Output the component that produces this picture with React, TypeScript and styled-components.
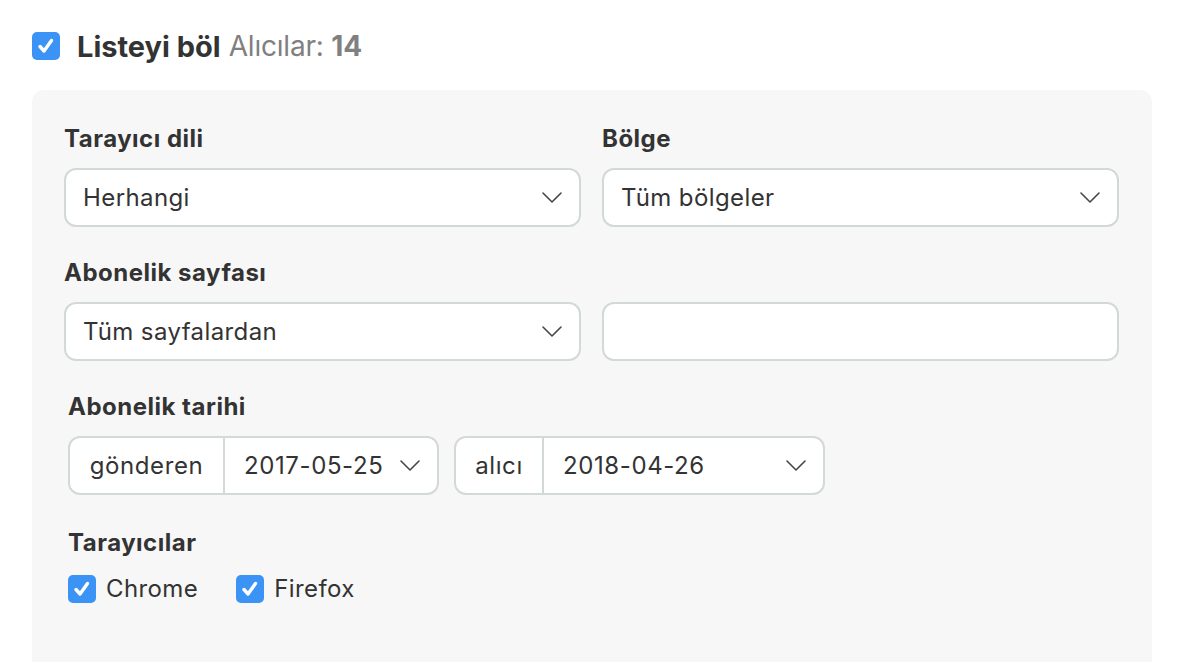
import React from 'react';
import styled, { createGlobalStyle } from 'styled-components';

const GlobalStyle = createGlobalStyle`
  * { box-sizing: border-box; }
  html, body {
    margin: 0;
    padding: 0;
    background: #fff;
    font-family: Inter, "Noto Sans", sans-serif;
    color: #333;
  }
`;

const Page = styled.div`
  padding: 32px 32px 0 32px;
  height: 662px;
  overflow: hidden;
`;

const HeaderRow = styled.label`
  display: flex;
  align-items: center;
  gap: 17px;
  height: 28px;
`;

const Box = styled.span`
  width: 28px;
  height: 28px;
  border-radius: 5px;
  background: #3b93f5;
  display: inline-flex;
  align-items: center;
  justify-content: center;
  flex-shrink: 0;
`;

const HeaderTitle = styled.span`
  font-size: 29px;
  font-weight: 700;
  color: #333;
  letter-spacing: 0;
`;

const HeaderMeta = styled.span`
  font-size: 28px;
  font-weight: 400;
  color: #808080;
  letter-spacing: -0.2px;
  margin-left: -9px;

  b {
    font-weight: 700;
  }
`;

const Panel = styled.div`
  margin-top: 30px;
  width: 1120px;
  min-height: 600px;
  background: #f7f7f7;
  border-radius: 12px 12px 0 0;
  padding: 34px 32px 32px 32px;
`;

const Grid = styled.div`
  display: grid;
  grid-template-columns: 517px 517px;
  column-gap: 21px;
`;

const Field = styled.div<{ $indent?: number }>`
  display: flex;
  flex-direction: column;
  padding-left: ${(p) => p.$indent || 0}px;
`;

const Label = styled.div`
  font-size: 24px;
  font-weight: 700;
  color: #333;
  height: 38px;
  line-height: 30px;
  margin-bottom: 6px;
  letter-spacing: 0.5px;
`;

const SelectBox = styled.div`
  height: 59px;
  background: #fff;
  border: 2px solid #d3d9d8;
  border-radius: 12px;
  display: flex;
  align-items: center;
  justify-content: space-between;
  padding: 0 17px 0 17px;
  font-size: 24px;
  letter-spacing: 0.4px;
  color: #333;
`;

const Spacer = styled.div<{ $h: number }>`
  height: ${(p) => p.$h}px;
`;

const DateRow = styled.div`
  display: flex;
  gap: 15px;
`;

const DateGroup = styled.div<{ $w: number }>`
  width: ${(p) => p.$w}px;
  height: 59px;
  background: #fff;
  border: 2px solid #d3d9d8;
  border-radius: 12px;
  display: flex;
  align-items: stretch;
  font-size: 24px;
  letter-spacing: 0.6px;
  color: #333;
`;

const Addon = styled.div<{ $w: number }>`
  width: ${(p) => p.$w}px;
  border-right: 2px solid #d3d9d8;
  display: flex;
  align-items: center;
  justify-content: center;
`;

const DateValue = styled.div`
  flex: 1;
  display: flex;
  align-items: center;
  justify-content: space-between;
  padding: 0 17px 0 19px;
`;

const Checks = styled.div`
  display: flex;
  gap: 38px;
  margin-top: 2px;
`;

const CheckItem = styled.label`
  display: flex;
  align-items: center;
  gap: 10px;
  font-size: 24px;
  letter-spacing: 0.4px;
  color: #333;
`;

const Tick = () => (
  <svg width="20" height="20" viewBox="0 0 20 20" fill="none">
    <path d="M4 10.5 L8 15 L15.5 4.5" stroke="#fff" strokeWidth="3.4" strokeLinecap="round" strokeLinejoin="round" />
  </svg>
);

const Chevron = () => (
  <svg width="20" height="11" viewBox="0 0 20 11" fill="none">
    <path d="M1 1 L10 10 L19 1" stroke="#474747" strokeWidth="1.6" strokeLinecap="round" strokeLinejoin="round" />
  </svg>
);

const Check: React.FC<{ label: string }> = ({ label }) => (
  <CheckItem>
    <Box>
      <Tick />
    </Box>
    {label}
  </CheckItem>
);

const Select: React.FC<{ value?: string; chevron?: boolean }> = ({ value, chevron = true }) => (
  <SelectBox>
    <span>{value}</span>
    {chevron && <Chevron />}
  </SelectBox>
);

export default function App() {
  return (
    <>
      <GlobalStyle />
      <Page>
        <HeaderRow>
          <Box>
            <Tick />
          </Box>
          <HeaderTitle>Listeyi böl</HeaderTitle>
          <HeaderMeta>
            Alıcılar: <b>14</b>
          </HeaderMeta>
        </HeaderRow>

        <Panel>
          <Grid>
            <Field>
              <Label>Tarayıcı dili</Label>
              <Select value="Herhangi" />
            </Field>
            <Field>
              <Label>Bölge</Label>
              <Select value="Tüm bölgeler" />
            </Field>
          </Grid>

          <Spacer $h={31} />

          <Grid>
            <Field>
              <Label>Abonelik sayfası</Label>
              <Select value="Tüm sayfalardan" />
            </Field>
            <Field>
              <Label />
              <Select chevron={false} />
            </Field>
          </Grid>

          <Spacer $h={31} />

          <Field $indent={4}>
            <Label>Abonelik tarihi</Label>
            <DateRow>
              <DateGroup $w={371}>
                <Addon $w={155}>gönderen</Addon>
                <DateValue>
                  <span>2017-05-25</span>
                  <Chevron />
                </DateValue>
              </DateGroup>
              <DateGroup $w={371}>
                <Addon $w={88}>alıcı</Addon>
                <DateValue>
                  <span>2018-04-26</span>
                  <Chevron />
                </DateValue>
              </DateGroup>
            </DateRow>
          </Field>

          <Spacer $h={33} />

          <Field $indent={4}>
            <Label>Tarayıcılar</Label>
            <Checks>
              <Check label="Chrome" />
              <Check label="Firefox" />
            </Checks>
          </Field>
        </Panel>
      </Page>
    </>
  );
}
